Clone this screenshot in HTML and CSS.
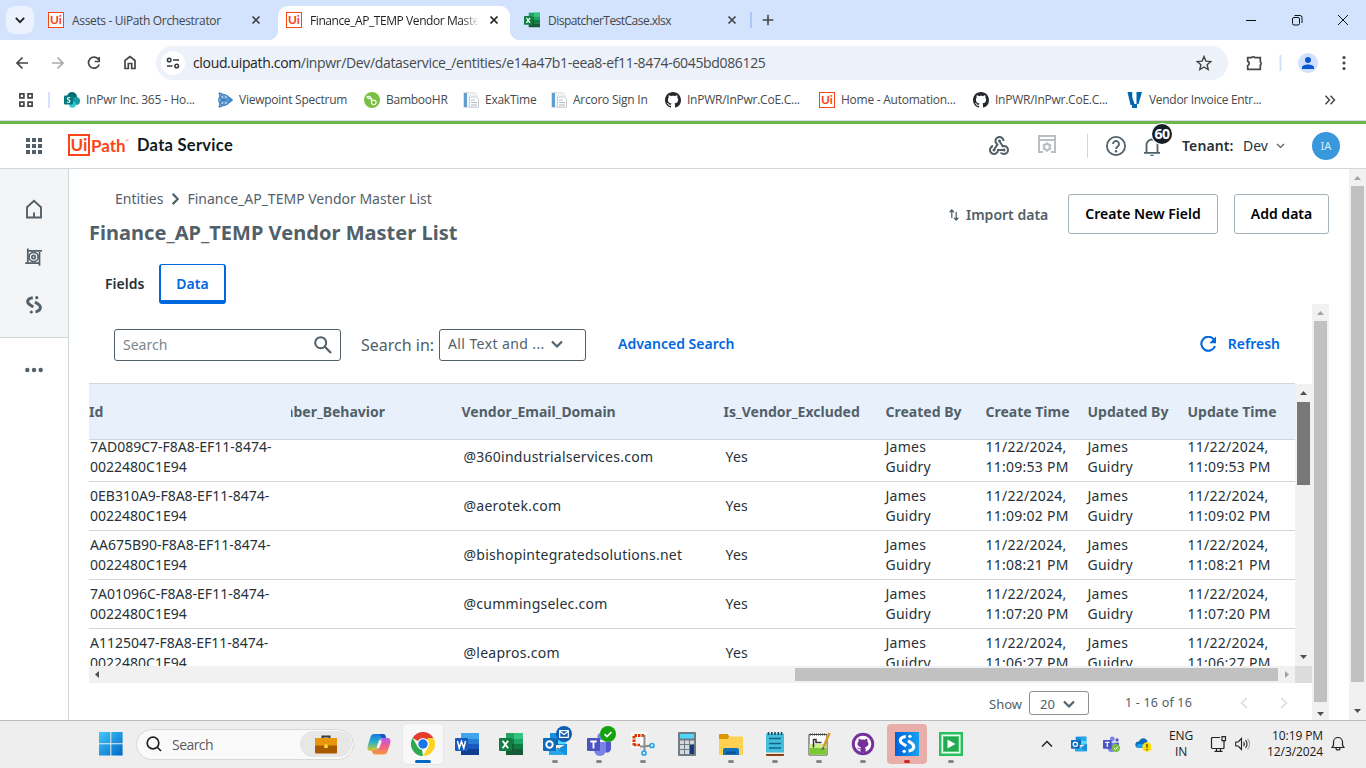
FILE: index.html
```html
<!DOCTYPE html>
<html lang="en">
<head>
<meta charset="utf-8">
<title>Finance_AP_TEMP Vendor Master List</title>
<link rel="stylesheet" href="styles.css">
</head>
<body>
<svg class="sprite" width="0" height="0" aria-hidden="true">
  <symbol id="x" viewBox="0 0 16 16"><path d="M4.500 4.500l7 7m0-7l-7 7" stroke="currentColor" stroke-width="1.700" fill="none"/></symbol>
  <symbol id="excel" viewBox="0 0 24 24"><path fill="#21a366" d="M7 1h17v6H7z"/><path fill="#107c41" d="M7 7h8v10H7z"/><path fill="#33c481" d="M15 1h9v6h-9z"/><path fill="#21a366" d="M15 7h9v5h-9z"/><path fill="#107c41" d="M15 12h9v5h-9z"/><path fill="#185c37" d="M7 12h8v5h9v6H7z"/><rect y="6" width="13" height="13" rx="1" fill="#107c41"/><path d="M3.600 8.800l5.500 7.400m0-7.400l-5.500 7.400" stroke="#fff" stroke-width="1.900"/></symbol>
  <symbol id="page" viewBox="0 0 16 16"><path fill="#f3f4f6" stroke="#d5d9de" stroke-width=".7" d="M.5.5h11l3 3v12H.5z"/><path fill="#5f9fd0" d="M1 1h3v14H1z"/><path fill="#fff" stroke="#bbc1c8" stroke-width=".8" d="M6.500 5h7l2 2v8h-9z"/><path d="M8 8h4M8 10.500h6M8 13h6" stroke="#aeb6bf"/></symbol>
  <symbol id="github" viewBox="0 0 16 16"><path fill="currentColor" d="M8 0C3.580 0 0 3.580 0 8c0 3.540 2.290 6.530 5.470 7.590.4.070.55-.17.55-.38 0-.19-.01-.82-.01-1.490-2.010.37-2.530-.49-2.690-.94-.09-.23-.48-.94-.82-1.130-.28-.15-.68-.52-.01-.53.63-.01 1.080.58 1.230.82.72 1.210 1.870.87 2.330.66.070-.52.28-.87.51-1.070-1.780-.2-3.640-.89-3.640-3.950 0-.87.31-1.590.82-2.150-.08-.2-.36-1.020.08-2.120 0 0 .67-.21 2.200.82.64-.18 1.320-.27 2-.27s1.360.09 2 .27c1.530-1.040 2.200-.82 2.200-.82.44 1.100.16 1.920.08 2.120.51.56.82 1.270.82 2.150 0 3.070-1.870 3.750-3.650 3.950.29.25.54.73.54 1.480 0 1.070-.01 1.930-.01 2.200 0 .21.15.46.55.38A8.010 8.010 0 0 0 16 8c0-4.420-3.580-8-8-8z"/></symbol>
  <symbol id="down" viewBox="0 0 12 12"><path d="M1 3.500L6 8.500l5-5" fill="none" stroke="currentColor" stroke-width="2.200"/></symbol>
  <symbol id="sloop" viewBox="0 0 20 20"><g fill="none" stroke="currentColor" stroke-width="2.900"><path d="M8.800 2.800C3 3.400 2.600 7.400 5.200 9.200L9.300 12"/><path d="M11 7l3.700 2.500c3 2.500 2 6.700-3.200 7.200"/></g><circle cx="12.800" cy="2.700" r="1.600" fill="currentColor"/><circle cx="7.300" cy="17" r="1.600" fill="currentColor"/></symbol>
  <symbol id="outlook" viewBox="0 0 24 24"><path fill="#1490df" d="M7 1h16v12H7z"/><path fill="#28a8ea" d="M15 1h8v6h-8z"/><path fill="#0a5fae" d="M7 7h8v6H7z"/><path fill="#50d9ff" d="M15 7h8v5h-8z"/><path fill="#123b6d" d="M6 12l9 5 9-5v4H6z"/><path fill="#1490df" d="M6 23l18-11v11z"/><path fill="#28a8ea" d="M6 12v11h17z"/><rect y="6" width="13" height="13" rx="1" fill="#0f6cbd"/><circle cx="6.500" cy="12.500" r="3.200" fill="none" stroke="#fff" stroke-width="1.900"/></symbol>
  <symbol id="teams" viewBox="0 0 24 24"><circle cx="21" cy="6" r="2.500" fill="#5059c9"/><circle cx="14" cy="4.500" r="3.600" fill="#7b83eb"/><path fill="#5059c9" d="M17 10h7v7a4 4 0 0 1-6 3z"/><path fill="#7b83eb" d="M7 10h12v8a6 6 0 0 1-12 0z"/><rect y="6" width="13" height="13" rx="1" fill="#4b53bc"/><path d="M3.300 9.500h6.400M6.500 9.500v7" stroke="#fff" stroke-width="1.800"/></symbol>
</svg>

<div class="tabstrip">
  <div class="tab-search"><svg width="12" height="12"><use href="#down"/></svg></div>
  <div class="tab tab-first"><b class="mark">Ui</b><span class="tab-title">Assets - UiPath Orchestrator</span><svg width="16" height="16"><use href="#x"/></svg></div>
  <div class="tab tab-active"><b class="mark">Ui</b><span class="tab-title fade">Finance_AP_TEMP Vendor Master List</span><svg width="16" height="16"><use href="#x"/></svg></div>
  <div class="tab tab-last"><svg width="16" height="16"><use href="#excel"/></svg><span class="tab-title tight">DispatcherTestCase.xlsx</span><svg width="16" height="16"><use href="#x"/></svg></div>
  <i class="tab-sep"></i>
  <svg class="new-tab" width="12" height="12"><path d="M6 .7v10.600M.7 6h10.600" stroke="#444746" stroke-width="1.600"/></svg>
  <svg class="win-buttons" width="112" height="20" fill="none" stroke="#111"><path d="M6 10.500h10"/><rect x="52.500" y="7.500" width="7" height="7.500" rx="1.500"/><path d="M54.500 5.500h5.500a2 2 0 0 1 2 2v5.500M98 5l10 10m0-10L98 15"/></svg>
</div>

<div class="toolbar">
  <svg width="146" height="46" fill="none" stroke="#444746" stroke-width="1.700"><path d="M28 23H17m5.500-5.500L17 23l5.500 5.500"/><path stroke="#a9abaa" d="M52 23h11m-5.500-5.500L63 23l-5.500 5.500"/><path d="M98.500 19.500a5.500 5.500 0 1 0 .7 5M99.200 17v4.500h-4.500"/><path d="M125 28.500v-8l5-4 5 4v8h-3.300v-5h-3.400v5z"/></svg>
  <div class="omnibox">
    <svg width="24" height="24"><circle cx="12" cy="12" r="12" fill="#fff"/><g fill="none" stroke="#33373b" stroke-width="1.500"><circle cx="8.200" cy="9" r="1.800"/><path d="M12 9h6M6 15h5.500"/><circle cx="15.700" cy="15" r="1.800"/></g></svg>
    <span class="url"><b>cloud.uipath.com</b>/inpwr/Dev/dataservice_/entities/e14a47b1-eea8-ef11-8474-6045bd086125</span>
    <svg class="star" width="16" height="16"><path d="M8 1.500l1.900 4.600 4.900.4-3.700 3.200 1.100 4.800L8 12l-4.200 2.500 1.100-4.800-3.700-3.200 4.900-.4z" fill="none" stroke="#444746" stroke-width="1.400"/></svg>
  </div>
  <svg class="bar-actions" width="138" height="46"><path d="M19.700 17.700h3.800a2 2 0 0 1 3.400 0h5.400v4.200a1.900 1.900 0 0 1 0 3.200v4.200H19.700v-3.700a2.200 2.200 0 0 0 0-4.200z" fill="none" stroke="#444746" stroke-width="1.700"/><path d="M52.500 15v16" stroke="#cfe0fc" stroke-width="2"/><circle cx="80" cy="23" r="10" fill="#cfe0fc"/><circle cx="80" cy="20" r="3" fill="#0b57d0"/><path d="M74 29v-1.500c0-4 12-4 12 0V29z" fill="#0b57d0"/><g fill="#444746"><circle cx="116" cy="17.500" r="1.600"/><circle cx="116" cy="23" r="1.600"/><circle cx="116" cy="28.500" r="1.600"/></g></svg>
</div>

<div class="bookmarks">
  <svg class="apps" width="14" height="14" fill="none" stroke="#444746" stroke-width="1.700"><path d="M.9.900h4v4h-4zM9.100.900h4v4h-4zM.9 9.100h4v4h-4zM9.100 9.100h4v4h-4z"/></svg>
  <i class="bm-sep"></i>
  <div class="bm w1"><svg width="16" height="16"><circle cx="8" cy="5" r="5" fill="#036c70"/><circle cx="12" cy="9" r="4" fill="#1a9ba1"/><circle cx="8.500" cy="12.500" r="3.300" fill="#37c6d0"/><rect y="3.500" width="9" height="9" rx="1" fill="#03787c"/><path d="M6.200 6C4 4.800 2.500 6.600 4 7.600c1.800.8 2.500 1.200 1.500 2.400-.8.500-1.800.3-2.600-.1" fill="none" stroke="#fff" stroke-width="1.100"/></svg><span>InPwr Inc. 365 - Ho...</span></div>
  <div class="bm w2"><svg width="16" height="16" fill="none" stroke="#3a7fc2" stroke-width="1.200"><path d="M2 1l4 1.500M2 15l4-1.500M11 5l4 3-4 3" stroke-width="1.600"/><circle cx="7" cy="8" r="5.300" fill="#a9c8e8"/><path d="M2.500 5.500l9 5M2.500 10.500l9-5M7 2.500v11M2 1l2.500 7L2 15M4.500 8H15"/></svg><span>Viewpoint Spectrum</span></div>
  <div class="bm w3"><svg width="16" height="16"><circle cx="8" cy="8" r="8" fill="#7ac142"/><path d="M7.500 6v4.300a2.300 2.300 0 1 0 2.300-2.200c-1.500 0-2.300 1-2.300 2M7.300 6.500C6.500 4.500 4.500 4.300 3 4.600c.5 1.700 2.300 2.400 4.300 1.900z" fill="none" stroke="#fff" stroke-width="1.200"/></svg><span>BambooHR</span></div>
  <div class="bm w4"><svg width="16" height="16"><use href="#page"/></svg><span>ExakTime</span></div>
  <div class="bm w5"><svg width="16" height="16"><use href="#page"/></svg><span>Arcoro Sign In</span></div>
  <div class="bm w6"><svg width="16" height="16"><use href="#github"/></svg><span>InPWR/InPwr.CoE.C...</span></div>
  <div class="bm w6"><b class="mark">Ui</b><span>Home - Automation...</span></div>
  <div class="bm w6"><svg width="16" height="16"><use href="#github"/></svg><span>InPWR/InPwr.CoE.C...</span></div>
  <div class="bm w9"><svg width="16" height="16" fill="#0067ac"><path d="M.5 0h5v6l2 6h2V0h5.500L11.500 12H10v4H5v-3H3.500z"/><path d="M5.500 0h3.500v5.500L7.700 9.500 5.500 5z" fill="#fff"/></svg><span>Vendor Invoice Entr...</span></div>
  <svg class="more" width="12" height="12"><path d="M1.500 1.800L5.500 6l-4 4.200M6.500 1.800l4 4.200-4 4.200" fill="none" stroke="#444746" stroke-width="1.500"/></svg>
</div>

<header class="app-header">
  <svg class="waffle" width="16" height="16" fill="#526069"><path d="M0 0h4v4H0zM6 0h4v4H6zM12 0h4v4h-4zM0 6h4v4H0zM6 6h4v4H6zM12 6h4v4h-4zM0 12h4v4H0zM6 12h4v4H6zM12 12h4v4h-4z"/></svg>
  <span class="logo"><b class="logo-ui">Ui</b><b class="logo-path">Path</b><i>®</i></span>
  <span class="product">Data Service</span>
  <svg class="hook" width="22" height="22" viewBox="1 1 22 22" fill="#526069"><path d="M10 15h5.880c.27-.31.67-.5 1.120-.5.83 0 1.500.67 1.500 1.500s-.67 1.500-1.500 1.500c-.44 0-.84-.19-1.120-.5H11.900c-.46 2.280-2.480 4-4.900 4-2.760 0-5-2.240-5-5 0-2.420 1.720-4.440 4-4.900v2.070C4.840 13.580 4 14.700 4 16c0 1.650 1.350 3 3 3s3-1.350 3-3v-1zm2.500-11c1.650 0 3 1.350 3 3h2c0-2.760-2.240-5-5-5s-5 2.240-5 5c0 1.430.6 2.710 1.550 3.620l-2.350 3.900c-.68.14-1.200.75-1.200 1.480 0 .83.67 1.500 1.500 1.500s1.500-.67 1.500-1.500c0-.16-.02-.31-.07-.45l3.380-5.630C10.490 9.610 9.500 8.420 9.500 7c0-1.650 1.350-3 3-3zm4.500 9c-.64 0-1.230.2-1.720.54l-3.050-5.070C11.530 8.350 11 7.740 11 7c0-.83.67-1.500 1.500-1.500S14 6.170 14 7c0 .15-.02.29-.06.43l2.190 3.650c.28-.05.57-.08.87-.08 2.760 0 5 2.240 5 5s-2.240 5-5 5c-1.850 0-3.470-1.010-4.330-2.500h2.670c.48.32 1.050.5 1.660.5 1.650 0 3-1.350 3-3s-1.350-3-3-3z"/></svg>
  <svg class="settings" width="18" height="18" fill="none" stroke="#b9bec2" stroke-width="2"><path d="M5 17H1V1h16v16h-4M1 5h16"/><circle cx="9" cy="12" r="2.900"/><path d="M9 7.200v2M9 14.800v2M4.900 9.600l1.700 1M11.400 13.400l1.700 1M13.100 9.600l-1.700 1M6.600 13.400l-1.700 1" stroke-width="1.800"/></svg>
  <i class="head-sep"></i>
  <svg class="help" width="20" height="20"><circle cx="10" cy="10" r="9.100" fill="none" stroke="#526069" stroke-width="1.800"/><path d="M7 8a3 3 0 1 1 4.800 2.400C10.600 11.300 10 11.700 10 13" fill="none" stroke="#526069" stroke-width="1.800"/><circle cx="10" cy="15.200" r="1.200" fill="#526069"/></svg>
  <span class="bell"><svg width="16" height="20"><path d="M0 16.800h16M2.500 17V9a5.500 5.500 0 0 1 11 0v8" fill="none" stroke="#526069" stroke-width="1.800"/><path d="M5.800 18.700h4.400l-1 1.300H6.800z" fill="#526069"/></svg><b>60</b></span>
  <span class="tenant">Tenant:</span><span class="dev">Dev</span>
  <svg class="dev-arrow" width="9" height="6"><path d="M1 1l3.500 3.500L8 1" fill="none" stroke="#526069" stroke-width="1.200"/></svg>
  <span class="avatar">IA</span>
</header>

<div class="main">
  <nav class="side">
    <div class="side-top">
      <svg width="18" height="20" fill="none" stroke="#526069" stroke-width="1.900"><path d="M2 18.500V8.200l7-6.500 7 6.500v10.300zM9 18.500v-5"/></svg>
      <svg width="18" height="18" fill="none" stroke="#526069" stroke-width="1.700"><path d="M2.800.5v14M.2 15.200h14M14.500 17.800V4M17 2.800H3.500"/><circle cx="8.600" cy="9" r="4.600"/><circle cx="8.600" cy="9" r="1.700"/></svg>
      <svg width="20" height="20"><use href="#sloop"/></svg>
    </div>
    <svg class="dots" width="18" height="6" fill="#526069"><circle cx="2.300" cy="3" r="2.200"/><circle cx="9" cy="3" r="2.200"/><circle cx="15.700" cy="3" r="2.200"/></svg>
  </nav>
  <section class="content">
    <div class="page-head">
      <div class="titles">
        <div class="crumbs"><span>Entities</span><svg width="8" height="12"><path d="M1.700.9L6.800 6l-5.100 5.100" fill="none" stroke="#526069" stroke-width="2.200"/></svg><span>Finance_AP_TEMP Vendor Master List</span></div>
        <h1>Finance_AP_TEMP Vendor Master List</h1>
      </div>
      <div class="actions">
        <span class="import"><svg width="10" height="12" fill="none" stroke="#526069" stroke-width="1.300"><path d="M2.800 9V1M.6 3.300L2.800 1 5 3.300M7.200 3v8M5 8.700L7.200 11l2.200-2.300"/></svg>Import data</span>
        <button class="create">Create New Field</button>
        <button class="add">Add data</button>
      </div>
    </div>
    <div class="tabs"><span>Fields</span><span class="on">Data</span></div>
    <div class="panel">
      <div class="panel-body">
        <div class="filters">
          <div class="search"><span>Search</span><svg width="18" height="18" fill="none" stroke="#526069" stroke-width="2"><circle cx="6.700" cy="6.700" r="5.500"/><path d="M10.800 10.800l6.200 6.200" stroke-width="2.300"/></svg></div>
          <span class="search-in">Search in:</span>
          <div class="select"><span>All Text and ...</span><svg width="12" height="12"><use href="#down"/></svg></div>
          <a class="advanced">Advanced Search</a>
          <a class="refresh"><svg width="17" height="16"><path d="M14.200 3.900A7 7 0 1 0 15 10" fill="none" stroke="#0067df" stroke-width="2.100"/><path d="M16 .5v6.700H9.300z" fill="#0067df"/></svg>Refresh</a>
        </div>
        <div class="table">
          <div class="grid">
            <div class="row head"><span>Id</span><span class="cut">mber_Behavior</span><span>Vendor_Email_Domain</span><span>Is_Vendor_Excluded</span><span>Created By</span><span>Create Time</span><span>Updated By</span><span>Update Time</span></div>
            <div class="rows">
              <div class="row"><span>7AD089C7-F8A8-EF11-8474-<br>0022480C1E94</span><span></span><span>@360industrialservices.com</span><span>Yes</span><span>James<br>Guidry</span><span>11/22/2024,<br>11:09:53 PM</span><span>James<br>Guidry</span><span>11/22/2024,<br>11:09:53 PM</span></div>
              <div class="row"><span>0EB310A9-F8A8-EF11-8474-<br>0022480C1E94</span><span></span><span>@aerotek.com</span><span>Yes</span><span>James<br>Guidry</span><span>11/22/2024,<br>11:09:02 PM</span><span>James<br>Guidry</span><span>11/22/2024,<br>11:09:02 PM</span></div>
              <div class="row"><span>AA675B90-F8A8-EF11-8474-<br>0022480C1E94</span><span></span><span>@bishopintegratedsolutions.net</span><span>Yes</span><span>James<br>Guidry</span><span>11/22/2024,<br>11:08:21 PM</span><span>James<br>Guidry</span><span>11/22/2024,<br>11:08:21 PM</span></div>
              <div class="row"><span>7A01096C-F8A8-EF11-8474-<br>0022480C1E94</span><span></span><span>@cummingselec.com</span><span>Yes</span><span>James<br>Guidry</span><span>11/22/2024,<br>11:07:20 PM</span><span>James<br>Guidry</span><span>11/22/2024,<br>11:07:20 PM</span></div>
              <div class="row"><span>A1125047-F8A8-EF11-8474-<br>0022480C1E94</span><span></span><span>@leapros.com</span><span>Yes</span><span>James<br>Guidry</span><span>11/22/2024,<br>11:06:27 PM</span><span>James<br>Guidry</span><span>11/22/2024,<br>11:06:27 PM</span></div>
            </div>
          </div>
          <div class="vbar dark"><i class="up"></i><i class="thumb th-rows"></i><i class="dn"></i></div>
          <div class="hbar"><i class="lf"></i><i class="thumb"></i><i class="rt"></i></div>
          <div class="corner"></div>
        </div>
        <div class="pager">
          <span class="show">Show</span>
          <div class="size"><span>20</span><svg width="12" height="12"><use href="#down"/></svg></div>
          <span class="range">1 - 16 of 16</span>
          <svg class="prev" width="8" height="12"><path d="M7 1L1.500 6 7 11" fill="none" stroke="#d8dadc" stroke-width="1.500"/></svg>
          <svg class="next" width="8" height="12"><path d="M1 1l5.500 5L1 11" fill="none" stroke="#d8dadc" stroke-width="1.500"/></svg>
        </div>
      </div>
      <div class="vbar"><i class="up"></i><i class="thumb th-panel"></i><i class="dn low"></i></div>
    </div>
  </section>
  <div class="vbar"><i class="up"></i><i class="thumb th-page"></i><i class="dn"></i></div>
</div>

<footer class="taskbar">
  <svg class="start" width="24" height="24"><defs><linearGradient id="wg" x2="1" y2="1"><stop stop-color="#43c8f8"/><stop offset="1" stop-color="#0067c8"/></linearGradient></defs><path fill="url(#wg)" d="M0 0h11.300v11.300H0zM12.300 0h11.300v11.300H12.300zM0 12.300h11.300v11.300H0zM12.300 12.300h11.300v11.300H12.300z"/></svg>
  <div class="task-search"><svg width="16" height="16" fill="none" stroke="#222" stroke-width="1.700"><circle cx="7" cy="7" r="5.800"/><path d="M11 11l4 4"/></svg><span>Search</span>
    <div class="brief"><svg width="22" height="19"><path d="M7.500 4V1.500h7V4" fill="none" stroke="#3b3b3b" stroke-width="2"/><rect y="3" width="22" height="15.500" rx="1" fill="#a85a00"/><path fill="#e8960c" d="M0 4a1 1 0 0 1 1-1h20a1 1 0 0 1 1 1v6.500H0z"/><path fill="#ffd83a" d="M9.300 9.500h3.400v3.500H9.300z"/></svg></div></div>
  <div class="apps-row">
    <div class="app"><svg width="24" height="24" viewBox="0 0 24 24"><defs><linearGradient id="cp1" x2="0" y2="1"><stop stop-color="#1a78e0"/><stop offset=".5" stop-color="#28b6c8"/><stop offset="1" stop-color="#e8c520"/></linearGradient><linearGradient id="cp2" x2="0" y2="1"><stop stop-color="#b45be8"/><stop offset=".5" stop-color="#f0608a"/><stop offset="1" stop-color="#f59a3c"/></linearGradient></defs><path fill="url(#cp1)" d="M7 2h9c2 0 2.500 1.500 3 4h-3c-2 0-2.800 1-3.200 2.500L10.500 17c-.6 1.500-1.500 2-3 2H4c-3 0-4-2-3.300-5L3.500 5C4.200 3 5.200 2 7 2z"/><path fill="url(#cp2)" d="M17 22.500H8c-2 0-2.500-1.500-3-4h3c2 0 2.800-1 3.200-2.500L13.500 8c.6-1.500 1.500-2 3-2H20c3 0 4 2 3.300 5l-2.800 8.500c-.7 2-1.700 3-3.500 3z"/><path fill="#1557c8" d="M12 2h4c2 0 2.500 1.500 3 4h-4z"/><path d="M13.500 8.500l-2.700 7.500" stroke="#f5f5f5" stroke-width="2.800"/></svg></div>
    <div class="app current"><svg width="24" height="24" viewBox="0 0 24 24"><path fill="#e33b2e" d="M12 12L1.600 6A12 12 0 0 1 22.400 6z"/><path fill="#fdd32a" d="M12 12l5-6h5.400A12 12 0 0 1 12 24l5.200-9z"/><path fill="#2da94f" d="M12 12l-1 6 1 6A12 12 0 0 1 1.600 6l5.200 9z"/><circle cx="12" cy="12" r="5.900" fill="#fff"/><circle cx="12" cy="12" r="4.700" fill="#1a73e8"/></svg><u></u></div>
    <div class="app"><svg width="24" height="24" viewBox="0 0 24 24"><path fill="#41a5ee" d="M6 1h18v6H6z"/><path fill="#2b7cd3" d="M6 7h18v5H6z"/><path fill="#185abd" d="M6 12h18v5H6z"/><path fill="#103f91" d="M6 17h18v6H6z"/><rect y="6" width="13" height="13" rx="1" fill="#185abd"/><path d="M2.500 9l1.700 7 2.300-6.500L8.800 16l1.700-7" fill="none" stroke="#fff" stroke-width="1.500"/></svg></div>
    <div class="app"><svg width="24" height="24"><use href="#excel"/></svg></div>
    <div class="app"><svg width="24" height="24"><use href="#outlook"/></svg><svg class="badge" width="16" height="16"><circle cx="8" cy="8" r="8" fill="#0f5eb5"/><path d="M3.700 4.700h8.600v6.600H3.700zM4 5.500L8 8.500l4-3" fill="none" stroke="#fff" stroke-width="1.200"/></svg><u></u></div>
    <div class="app"><svg width="24" height="24"><use href="#teams"/></svg><svg class="badge" width="16" height="16"><circle cx="8" cy="8" r="8" fill="#13a10e"/><path d="M4.500 8.200L7 10.500 11.500 6" fill="none" stroke="#fff" stroke-width="1.700"/></svg><u></u></div>
    <div class="app"><svg width="24" height="24" viewBox="0 0 24 24"><path fill="#f9f9f9" d="M0 0h16v16H0z"/><path d="M13 3.500H3V14" fill="none" stroke="#d83b01" stroke-width="3" stroke-dasharray="2.500 1"/><path d="M3 13h7" stroke="#d83b01" stroke-width="2.500" stroke-dasharray="2.500 1"/><path d="M13.500 3v11.500l6-1M9 14.500h4.500V20" fill="none" stroke="#8c8c8c" stroke-width="2"/><g fill="none" stroke="#2aa7e8" stroke-width="1.700"><circle cx="21" cy="13.500" r="2"/><circle cx="13" cy="21" r="2"/></g></svg><u></u></div>
    <div class="app"><svg width="24" height="24" viewBox="0 0 24 24"><rect x="3" width="18" height="24" rx="1" fill="#717b84"/><path fill="#50d6f8" d="M5 2h14v4.500H5z"/><path fill="#d3d9dd" d="M5 8.500h4V12H5zM10 8.500h4V12h-4zM15 8.500h4V12h-4zM5 13h4v4H5zM10 13h4v4h-4zM5 18h4v4H5zM10 18h4v4h-4z"/><path fill="#123c78" d="M15 13h4v9h-4z"/></svg></div>
    <div class="app"><svg width="24" height="24" viewBox="0 0 24 24"><path fill="#dc9600" d="M0 3a1 1 0 0 1 1-1h7.500l2 2.500L8.500 7H0z"/><path fill="#ffd150" d="M0 7h8.500l2-2.500H23a1 1 0 0 1 1 1V22a1 1 0 0 1-1 1H1a1 1 0 0 1-1-1z"/><path fill="#1272bd" d="M4 23v-5a2 2 0 0 1 2-2h12a2 2 0 0 1 2 2v5z"/><path fill="#0b5599" d="M7 19.500h10V22H7z"/></svg><u></u></div>
    <div class="app"><svg width="24" height="24" viewBox="0 0 24 24"><rect x="3" y="1.500" width="18" height="21" rx="1" fill="#42bfdc"/><path fill="#873f13" d="M3 21h18v2a1 1 0 0 1-1 1H4a1 1 0 0 1-1-1z"/><path fill="#f4e5d5" d="M3 20.500h18V22H3z"/><path d="M5.500 0v3M8.800 0v3M12 0v3M15.300 0v3M18.500 0v3" stroke="#174b67" stroke-width="1.600"/><path d="M6 6.500h12M6 11.500h12M6 16h12" stroke="#146384" stroke-width="1.500"/></svg><u></u></div>
    <div class="app"><svg width="24" height="24" viewBox="0 0 24 24"><path fill="#fff" stroke="#3b453b" d="M2 2.500h18V23H2z"/><path fill="#cdee8e" d="M2.500 12h17v10.500h-17z"/><path fill="#7cc832" d="M2.500 16h17v6.500h-17z"/><path d="M3 2.500h16" stroke="#444" stroke-width="2" stroke-dasharray="1 1"/><path d="M6.500 15.500v-8H9v3h5.500" fill="none" stroke="#333" stroke-width="1.500"/><path d="M22.500 1l-6 14" stroke="#d89a2a" stroke-width="2.600"/><path d="M16.500 15l-1.200 3" stroke="#555" stroke-width="1.500"/></svg><u></u></div>
    <div class="app"><svg width="24" height="24" viewBox="0 0 24 24"><circle cx="12" cy="12" r="11.200" fill="#74309b"/><circle cx="12" cy="12" r="8.300" fill="#fff"/><path fill="#74309b" d="M9.500 20v-2.800c-2 .4-2.800-.5-3.300-1.700 1.300 0 1.500 1.300 3.300 1 0-.6.200-1 .5-1.300C6 14.700 5.800 11 7.600 9.500c-.3-1-.1-2 .2-2.800 1 0 1.800.5 2.500 1a9 9 0 0 1 3.400 0c.7-.5 1.500-1 2.500-1 .3.800.5 1.800.2 2.800 1.800 1.500 1.600 5.200-2.400 5.700.4.500.6 1 .6 1.700V20z"/></svg><u></u></div>
    <div class="app alert"><svg width="24" height="24" viewBox="0 0 24 24"><defs><linearGradient id="ug" x2="1"><stop stop-color="#0060dc"/><stop offset="1" stop-color="#15a2f0"/></linearGradient></defs><path fill="url(#ug)" d="M0 0h24v24H0z"/><svg x="1.500" y="1.500" width="21" height="21" color="#fff"><use href="#sloop"/></svg></svg><u></u></div>
    <div class="app"><svg width="24" height="24" viewBox="0 0 24 24"><path fill="#29bf5b" d="M0 0h24v24H0z"/><path fill="none" stroke="#e9fff0" stroke-width="1.700" d="M3.300 3.300h17.400v17.400H3.300z"/><path fill="#22a951" d="M5 5h14v14H5z"/><path fill="#fff" d="M8.500 7.500l8 4.500-8 4.500z"/></svg><u></u></div>
  </div>
  <div class="tray">
    <svg class="tray-up" width="12" height="8"><path d="M1 6.500L6 1.500l5 5" fill="none" stroke="#222" stroke-width="1.500"/></svg>
    <svg class="tr" width="16" height="16"><use href="#outlook"/></svg>
    <span class="tr tr-badge"><svg width="16" height="16"><use href="#teams"/></svg><svg class="mini" width="8" height="8"><circle cx="4" cy="4" r="4" fill="#7ac143"/><path d="M2 4l1.500 1.500L6 2.800" fill="none" stroke="#fff"/></svg></span>
    <svg class="tr" width="17" height="16"><path fill="#0f6cbd" d="M1 11c-2-4 1-6 3-5.500C5.500 1.500 11 1 12.500 5.500L9 12H3z"/><path fill="#1ca0ee" d="M3 12c-2-.5-2-4 1-4h9v4z"/><circle cx="12" cy="11" r="4.700" fill="#ffde00"/><path d="M12 8v3.800M12 13v1.200" stroke="#333" stroke-width="1.200"/></svg>
    <span class="lang">ENG<br>IN</span>
    <svg class="net" width="17" height="16" fill="none" stroke="#222" stroke-width="1.200"><path d="M10 1.500H2.500a1 1 0 0 0-1 1v9a1 1 0 0 0 1 1h11.500M4.500 15.400h8M6.500 13v2.500M10.500 13v2.500M12 .7h3.500v4H12zM14 5v7.500"/></svg>
    <svg class="vol" width="16" height="14" fill="none" stroke="#222" stroke-width="1.100"><path d="M.7 5h2.500L6.500 1.500v11L3.200 9H.7zM8.500 5a3 3 0 0 1 0 4M10.500 3.200a5.500 5.500 0 0 1 0 7.600"/><path stroke="#aaa" d="M12.500 1.500a8 8 0 0 1 0 11"/></svg>
    <span class="clock">10:19 PM<br>12/3/2024</span>
    <svg class="tbell" width="14" height="16" fill="none" stroke="#222" stroke-width="1.200"><path d="M1 11.500l1.500-2.300V6a4.500 4.500 0 0 1 9 0v3.200l1.500 2.300zM5 12a2 2 0 0 0 4 0"/></svg>
  </div>
</footer>
</body>
</html>
```
FILE: styles.css
```css
* { box-sizing: border-box; }
body { margin: 0; width: 1366px; height: 768px; overflow: hidden; display: flex; flex-direction: column; background: #fff; font-family: "Noto Sans", sans-serif; font-size: 14px; color: #273139; }
svg { display: block; flex: none; }
i, u { display: block; flex: none; }
.sprite { position: absolute; }
.mark { width: 16px; height: 16px; flex: none; border: 1.500px solid #fa4616; background: #fff; color: #fa4616; font: bold 12px/13px Lato, sans-serif; letter-spacing: 0; text-align: center; }

/* Browser tabs */
.tabstrip { height: 40px; flex: none; display: flex; align-items: center; background: #d3e2fd; font-family: "Open Sans", sans-serif; font-size: 12px; color: #444746; }
.tab-search { width: 28px; height: 28px; margin-left: 6px; border-radius: 9px; background: #ebf1fd; display: flex; align-items: center; justify-content: center; color: #1f1f1f; }
.tab-search svg { width: 10px; height: 10px; }
.tab { display: flex; align-items: center; }
.tab-title { width: 176px; margin-left: 8px; white-space: nowrap; overflow: hidden; letter-spacing: -0.34px; }
.tab-first { margin-left: 14px; width: 230px; }
.tab-active { width: 232px; height: 34px; align-self: flex-end; padding: 0 0 6px 8px; border-radius: 10px 10px 0 0; background: #fff; color: #1f1f1f; position: relative; }
.tab-active::before, .tab-active::after { content: ""; position: absolute; bottom: 0; width: 10px; height: 10px; }
.tab-active::before { left: -10px; background: radial-gradient(circle at 0 0, transparent 10px, #fff 10.5px); }
.tab-active::after { right: -10px; background: radial-gradient(circle at 100% 0, transparent 10px, #fff 10.5px); }
.fade { width: 168px; margin-right: 8px; letter-spacing: -0.42px; -webkit-mask-image: linear-gradient(90deg, #000 152px, transparent 169px); }
.tab-last { margin-left: 14px; width: 216px; }
.tight { letter-spacing: -0.52px; }
.tab-sep { width: 2px; height: 16px; margin-left: 10px; background: #a8c7fa; }
.new-tab { margin-left: 10px; }
.win-buttons { margin-left: auto; margin-right: 14px; }

/* Address bar */
.toolbar { height: 46px; flex: none; display: flex; align-items: center; background: #fff; }
.omnibox { width: 1072px; height: 34px; margin-left: 10px; border-radius: 17px; background: #ecf1fa; display: flex; align-items: center; padding-left: 5px; }
.url { margin-left: 8px; margin-top: -2px; font-family: "Open Sans", sans-serif; font-size: 14px; letter-spacing: -0.34px; color: #474a4d; white-space: nowrap; }
.url b { font-weight: 400; color: #1f1f1f; }
.star { margin-left: auto; margin-right: 16px; }

/* Bookmarks */
.bookmarks { height: 35px; flex: none; display: flex; align-items: center; padding-bottom: 7px; border-bottom: 1px solid #dadce0; font-family: "Open Sans", sans-serif; font-size: 12px; letter-spacing: -0.25px; color: #474a4d; white-space: nowrap; }
.apps { margin-left: 19px; }
.bm-sep { width: 2px; height: 16px; margin: 0 14px 0 15px; background: #d3e2fd; }
.bm { display: flex; align-items: center; gap: 6px; flex: none; }
.bm svg { color: #24292f; }
.w1 { width: 153px; }
.w2 { width: 147px; }
.w3 { width: 99px; }
.w4 { width: 88px; }
.w5 { width: 114px; }
.w6 { width: 154px; }
.w9 { width: 197px; letter-spacing: -0.3px; }

/* Application header */
.app-header { height: 48px; flex: none; display: flex; align-items: center; border-top: 3px solid #6cb44c; border-bottom: 1px solid #cfd8dd; background: #fff; }
.waffle { margin-left: 26px; }
.logo { width: 61px; margin-left: 26px; margin-top: -2px; display: flex; align-items: center; color: #fa4616; font-family: Lato, sans-serif; font-size: 17px; }
.logo-ui { width: 22px; height: 22px; border: 2px solid #fa4616; line-height: 18px; text-align: center; }
.logo-path { margin-left: 1px; }
.logo i { font-size: 4px; font-style: normal; margin-top: -10px; }
.product { margin-left: 8px; margin-top: -3px; width: 110px; font-family: Lato, sans-serif; font-weight: 700; font-size: 16.500px; letter-spacing: .28px; color: #111b21; white-space: nowrap; }
.hook { margin-left: 741px; }
.settings { margin-left: 28px; margin-top: -4px; }
.head-sep { width: 1px; height: 24px; margin-left: 31px; background: #cfd8dd; }
.help { margin-left: 18px; }
.bell { position: relative; margin-left: 18px; }
.bell b { position: absolute; left: 8px; top: -12px; width: 20px; height: 20px; border-radius: 10px; background: #182027; box-shadow: 0 0 0 1px #fff; color: #fff; font-size: 14px; letter-spacing: -0.5px; line-height: 20px; text-align: center; z-index: 1; }
.tenant { margin-left: 22px; width: 61px; margin-top: -1px; font-weight: 600; letter-spacing: .1px; }
.dev { width: 33px; margin-top: -1px; }
.avatar { width: 28px; height: 28px; margin-left: 27px; border-radius: 50%; background: #3898db; color: #d8eefb; font-size: 11px; line-height: 28px; text-align: center; }

/* Page */
.main { height: 551px; flex: none; display: flex; }
.side { width: 69px; border-right: 1px solid #cfd8dd; }
.side-top { height: 169px; padding-top: 30px; background: #f4f5f7; border-bottom: 1px solid #cfd8dd; display: flex; flex-direction: column; align-items: center; gap: 29px; color: #526069; }
.dots { margin: 29px auto 0 25px; }
.content { width: 1280px; padding-left: 20px; }
.page-head { height: 95px; display: flex; justify-content: space-between; }
.crumbs { display: flex; align-items: center; gap: 8px; padding-left: 26px; margin-top: 20px; line-height: 20px; color: #526069; white-space: nowrap; }
h1 { margin: 11px 0 0; font-size: 20px; line-height: 26px; font-weight: 700; color: #526069; white-space: nowrap; letter-spacing: .03px; }
.actions { display: flex; align-items: flex-start; padding: 25px 20px 0 0; font-weight: 600; }
.import { display: flex; align-items: center; gap: 7px; width: 119px; height: 41px; color: #526069; white-space: nowrap; }
button { height: 40px; padding: 0 0 2px; background: #fff; border: 1px solid #a4b1b8; border-radius: 3px; font: 600 14px "Noto Sans", sans-serif; color: #000; }
.create { width: 150px; margin-right: 16px; }
.add { width: 95px; }
.tabs { height: 40px; display: flex; font-weight: 600; line-height: 40px; }
.tabs span { padding-left: 16px; width: 70px; }
.tabs .on { width: 67px; padding: 0; text-align: center; border: 2px solid #0067df; border-top-width: 1px; border-bottom-width: 4px; border-radius: 3px; color: #0067df; line-height: 38px; }
.panel { height: 416px; display: flex; }
.panel-body { width: 1223px; }
.filters { height: 79px; display: flex; align-items: center; padding: 3px 0 0 25px; color: #526069; }
.search { width: 227px; height: 32px; border: 1px solid #526069; border-radius: 3px; display: flex; align-items: center; justify-content: space-between; padding: 0 8px 1px; color: #7c868d; }
.search-in { margin-left: 20px; width: 78px; font-size: 16px; white-space: nowrap; }
.select { width: 147px; height: 32px; border: 1px solid #526069; border-radius: 3px; display: flex; align-items: center; padding: 0 0 3px 8px; gap: 6px; white-space: nowrap; letter-spacing: .4px; }
.advanced { margin-left: 32px; margin-top: -3px; font-weight: 600; color: #0067df; }
.refresh { display: flex; align-items: center; gap: 11px; margin-left: auto; margin-right: 32px; margin-top: -3px; font-weight: 600; color: #0067df; }

/* Data table */
.table { display: grid; grid-template: 283px 17px / 1206px 17px; }
.row { display: grid; grid-template-columns: 202px 170.500px 262px 162px 100px 102px 100px 107.500px; align-items: center; height: 49px; border-bottom: 1px solid #cfd8dd; line-height: 20px; white-space: nowrap; letter-spacing: .25px; }
.rows .row span:first-child { padding-left: 1px; letter-spacing: 0; }
.rows .row span:nth-child(3), .rows .row span:nth-child(4) { padding-left: 2px; }
.head { height: 57px; border-top: 1px solid #cfd8dd; background: #e8f1fb; font-weight: 700; color: #526069; letter-spacing: 0; }
.cut { display: flex; justify-content: flex-end; width: 94px; overflow: hidden; }
.rows { height: 226px; overflow: hidden; }
.rows .row:first-child { margin-top: -7px; }

/* Scrollbars */
.vbar { width: 17px; background: #f1f1f1; display: flex; flex-direction: column; align-items: center; }
.thumb { background: #c1c1c1; }
.vbar .thumb { width: 13px; }
.dark { margin-top: 1px; }
.dark .thumb { background: #787878; }
.th-rows { height: 83px; margin-top: 1px; }
.th-panel { height: 381px; }
.th-page { height: 496px; }
.up { height: 17px; width: 7px; background: #a3a3a3; clip-path: polygon(50% 7px, 100% 11px, 0 11px); }
.dn { height: 17px; width: 7px; margin-top: auto; background: #505050; clip-path: polygon(0 6px, 100% 6px, 50% 10px); }
.dark .up { background: #505050; }
.low { margin-bottom: -3px; }
.hbar { background: #f1f1f1; display: flex; align-items: center; }
.hbar .thumb { width: 483px; height: 13px; margin-left: 689px; }
.lf { width: 17px; height: 7px; background: #505050; clip-path: polygon(6px 50%, 10px 0, 10px 100%); }
.rt { width: 17px; height: 7px; background: #a3a3a3; clip-path: polygon(7px 0, 11px 50%, 7px 100%); }
.corner { background: #dcdcdc; }

.pager { height: 37px; display: flex; align-items: center; padding: 3px 0 0 900px; color: #526069; font-size: 13px; }
.show { width: 40px; margin-top: 2px; }
.size { width: 60px; height: 24px; border: 1px solid #8a9297; border-radius: 3px; display: flex; align-items: center; gap: 8px; padding: 2px 0 0 10px; }
.range { margin-left: 36px; width: 115px; font-size: 12.500px; letter-spacing: .2px; margin-top: -2px; }
.prev { margin-top: -1px; }
.next { margin-left: 32px; margin-top: -1px; }

/* Taskbar */
.taskbar { height: 48px; flex: none; display: flex; align-items: center; padding-bottom: 1px; background: #eee; border-top: 1px solid #bcbcbc; }
.start { margin-left: 99px; }
.task-search { width: 218px; height: 31px; margin-left: 13px; border-radius: 16px; border: 1px solid #d8d8d8; background: #fafafa; display: flex; align-items: center; padding-left: 9px; font-size: 14px; color: #5c5c5c; font-family: "Open Sans", sans-serif; }
.task-search span { margin-left: 10px; letter-spacing: -0.55px; }
.brief { width: 52px; height: 26px; margin-left: auto; margin-right: 1px; border-radius: 13px; background: #e7e7e7; display: flex; align-items: center; justify-content: center; }
.apps-row { display: flex; gap: 4px; margin-left: 5px; }
.app { position: relative; width: 40px; height: 40px; border-radius: 4px; display: flex; align-items: center; justify-content: center; }
.app u { position: absolute; bottom: 1px; left: 17px; width: 6px; height: 3px; border-radius: 2px; background: #868686; }
.current { background: #f8f8f8; box-shadow: 0 0 0 .5px #ddd; }
.current u { left: 12px; width: 16px; background: #0067c0; }
.alert { background: #eaaeaa; }
.alert u { background: #c42b1c; }
.badge { position: absolute; left: 21px; top: 2px; }
.tray { display: flex; align-items: center; margin-left: 70px; height: 47px; font-family: "Open Sans", sans-serif; font-size: 12px; line-height: 16px; color: #1a1a1a; }
.tr { width: 16px; margin-left: 16px; position: relative; }
.tray-up { margin-right: 2px; }
.mini { position: absolute; right: -1px; bottom: 0; }
.lang { width: 30px; margin-left: 15px; text-align: center; letter-spacing: -0.2px; }
.net { margin-left: 14px; }
.vol { margin-left: 8px; }
.clock { width: 66px; margin-left: 6px; text-align: right; letter-spacing: -0.1px; white-space: nowrap; }
.tbell { margin-left: 8px; }
```
